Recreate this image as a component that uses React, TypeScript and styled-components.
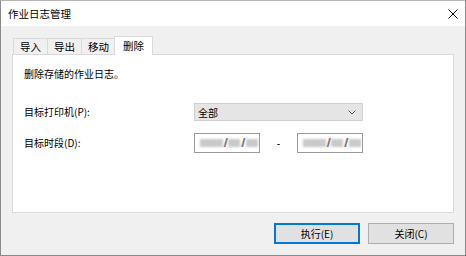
import React, { useState } from 'react'
import styled, { createGlobalStyle, css } from 'styled-components'

const GlobalStyle = createGlobalStyle`
    html, body {
        margin: 0;
        padding: 0;
        background: #ffffff;
    }
    body {
        font-family: "Noto Sans CJK SC", "Noto Sans", sans-serif;
        font-size: 10px;
        color: #000000;
    }
`

const Window = styled.div`
    box-sizing: border-box;
    width: 466px;
    height: 256px;
    display: flex;
    flex-direction: column;
    background: #f0f0f0;
    border: 1px solid #8a8a8a;
    border-top-color: #b5b5b5;
`

const TitleBar = styled.div`
    height: 25px;
    flex: none;
    display: flex;
    align-items: center;
    justify-content: space-between;
    background: #ffffff;
    padding-left: 7px;
    padding-right: 7px;
    font-size: 10.5px;
`

const CloseGlyph = styled.svg`
    width: 10px;
    height: 10px;
    display: block;
`

const Body = styled.div`
    flex: 1;
    display: flex;
    flex-direction: column;
    padding: 10px 11px 0 11px;
`

const TabStrip = styled.div`
    height: 18px;
    display: flex;
    align-items: flex-end;
    padding-left: 1px;
    position: relative;
    z-index: 1;
`

const Tab = styled.div<{ $active?: boolean }>`
    box-sizing: border-box;
    width: 35px;
    height: 16px;
    display: flex;
    align-items: center;
    justify-content: center;
    background: #f0f0f0;
    border: 1px solid #d9d9d9;
    border-bottom: none;
    margin-right: -1px;
    font-size: 10.5px;
    ${p => p.$active && css`
        width: 39px;
        height: 19px;
        margin-left: -1px;
        margin-bottom: -1px;
        padding-bottom: 2px;
        background: #ffffff;
    `}
`

const Panel = styled.div`
    box-sizing: border-box;
    height: 159px;
    background: #ffffff;
    border: 1px solid #d9d9d9;
    padding: 11px 11px;
`

const Intro = styled.div`
    line-height: 16px;
    margin-bottom: 21px;
`

const Form = styled.div`
    display: grid;
    grid-template-columns: 170px auto;
    grid-template-rows: 18px 20px;
    row-gap: 12px;
    align-items: center;
`

const Label = styled.div`
    line-height: 16px;
`

const Select = styled.div`
    box-sizing: border-box;
    width: 169px;
    height: 18px;
    display: flex;
    align-items: center;
    justify-content: space-between;
    padding: 0 6px 0 3px;
    background: #e5e5e5;
    border: 1px solid #d0d0d0;
`

const Chevron = styled.svg`
    width: 8px;
    height: 5px;
    display: block;
`

const DateRow = styled.div`
    display: flex;
    align-items: center;
`

const DateBox = styled.div`
    box-sizing: border-box;
    width: 66px;
    height: 20px;
    display: flex;
    align-items: center;
    padding-left: 5px;
    gap: 1px;
    background: #ffffff;
    border: 1px solid #9a9a9a;
`

const Blur = styled.span<{ $w: number }>`
    width: ${p => p.$w}px;
    height: 8px;
    background: #c9c9c9;
    filter: blur(1px);
`

const Slash = styled.span`
    font-family: "DejaVu Sans", sans-serif;
    font-size: 10px;
    line-height: 10px;
    color: #5a5070;
    text-shadow: -0.5px 0 0 #e0a040, 0.5px 0 0 #4080e0;
`

const Dash = styled.span`
    width: 37px;
    text-align: center;
    font-family: "Liberation Sans", sans-serif;
    font-size: 10px;
`

const Footer = styled.div`
    display: flex;
    justify-content: flex-end;
    gap: 8px;
    padding-top: 10px;
`

const Button = styled.button<{ $focused?: boolean }>`
    box-sizing: border-box;
    width: 86px;
    height: 21px;
    padding: 0;
    font-family: inherit;
    font-size: 10px;
    color: #000000;
    background: #e1e1e1;
    border: 1px solid #adadad;
    ${p => p.$focused && css`
        border: 1px solid #0078d7;
        box-shadow: inset 0 0 0 1px #0078d7;
    `}
`

const tabs = ['导入', '导出', '移动', '删除']

const DateField = () => (
    <DateBox>
        <Blur $w={23} />
        <Slash>/</Slash>
        <Blur $w={12} />
        <Slash>/</Slash>
        <Blur $w={12} />
    </DateBox>
)

const App = () => {
    const [activeTab, setActiveTab] = useState(3)

    return (
        <>
            <GlobalStyle />
            <Window>
                <TitleBar>
                    <span>作业日志管理</span>
                    <CloseGlyph viewBox="0 0 10 10">
                        <path d="M0.5 0.5 L9.5 9.5 M9.5 0.5 L0.5 9.5" stroke="#000" strokeWidth="1" />
                    </CloseGlyph>
                </TitleBar>
                <Body>
                    <TabStrip>
                        {tabs.map((t, i) => (
                            <Tab key={t} $active={i === activeTab} onClick={() => setActiveTab(i)}>{t}</Tab>
                        ))}
                    </TabStrip>
                    <Panel>
                        <Intro>删除存储的作业日志。</Intro>
                        <Form>
                            <Label>目标打印机(P):</Label>
                            <Select>
                                <span>全部</span>
                                <Chevron viewBox="0 0 8 5">
                                    <path d="M0.5 0.5 L4 4 L7.5 0.5" fill="none" stroke="#555" strokeWidth="1" />
                                </Chevron>
                            </Select>
                            <Label>目标时段(D):</Label>
                            <DateRow>
                                <DateField />
                                <Dash>-</Dash>
                                <DateField />
                            </DateRow>
                        </Form>
                    </Panel>
                    <Footer>
                        <Button $focused>执行(E)</Button>
                        <Button>关闭(C)</Button>
                    </Footer>
                </Body>
            </Window>
        </>
    )
}

export default App
